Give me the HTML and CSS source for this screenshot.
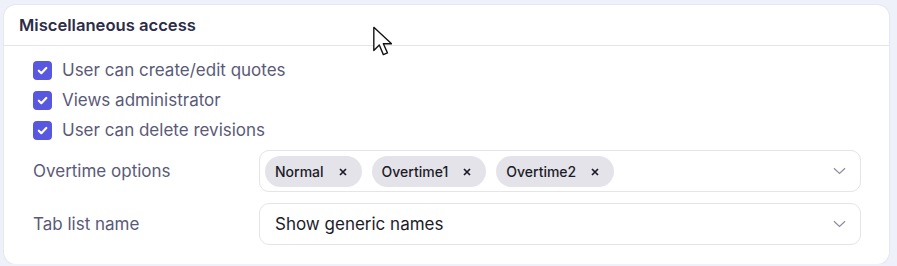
FILE: index.html
```html
<!DOCTYPE html>
<html lang="en">
<head>
  <meta charset="UTF-8" />
  <meta name="viewport" content="width=device-width, initial-scale=1.0"/>
  <title>Miscellaneous access</title>
  <link rel="stylesheet" href="styles.css">
</head>
<body>

  <div class="card">
    <div class="card-head">Miscellaneous access</div>

    <div class="card-body">
      <!-- Checkboxes -->
      <label class="check-row"><span class="box"><svg viewBox="0 0 12 12"><path d="M2.6 6.2l2.3 2.3 4.6-4.8"/></svg></span>User can create/edit quotes</label>
      <label class="check-row"><span class="box"><svg viewBox="0 0 12 12"><path d="M2.6 6.2l2.3 2.3 4.6-4.8"/></svg></span>Views administrator</label>
      <label class="check-row"><span class="box"><svg viewBox="0 0 12 12"><path d="M2.6 6.2l2.3 2.3 4.6-4.8"/></svg></span>User can delete revisions</label>

      <!-- Selects -->
      <div class="field first">
        <div class="field-label">Overtime options</div>
        <div class="select">
          <div class="chips">
            <span class="chip">Normal<svg class="x" viewBox="0 0 8 8"><path d="M1 1l6 6M7 1L1 7"/></svg></span>
            <span class="chip">Overtime1<svg class="x" viewBox="0 0 8 8"><path d="M1 1l6 6M7 1L1 7"/></svg></span>
            <span class="chip">Overtime2<svg class="x" viewBox="0 0 8 8"><path d="M1 1l6 6M7 1L1 7"/></svg></span>
          </div>
          <svg class="chev" viewBox="0 0 14 8"><path d="M1 1l6 5.5L13 1"/></svg>
        </div>
      </div>

      <div class="field">
        <div class="field-label">Tab list name</div>
        <div class="select">
          <div class="value">Show generic names</div>
          <svg class="chev" viewBox="0 0 14 8"><path d="M1 1l6 5.5L13 1"/></svg>
        </div>
      </div>
    </div>

    <svg class="cursor" viewBox="0 0 14 22"><path d="M1 1v17l4-4 3 7 3-1.3-3-6.7h6z"/></svg>
  </div>

</body>
</html>
```

FILE: styles.css
```css
:root {
  --page-bg: #eef0fa;
  --white: #fff;
  --title: #2b2c48;
  --label: #5a5a78;
  --text: #1c1c28;
  --line: #e4e4ea;
  --indigo: #5757e0;
  --chip: #e4e3ea;
  --chev: #8c8c9c;
}

* {
  box-sizing: border-box;
}

body {
  margin: 0;
  font-family: Inter, 'Noto Sans', sans-serif;
  background: var(--page-bg);
  color: var(--text);
  font-size: 17px;
}

.card {
  position: relative;
  width: 885px;
  margin: 5px 0 0 4px;
  height: 259px;
  background: var(--white);
  border-radius: 12px;
  box-shadow: 0 0 0 1px #e6e7f0;
}

.card-head {
  height: 41px;
  padding: 0 15px;
  display: flex;
  align-items: center;
  font-size: 16.6px;
  font-weight: 600;
  color: var(--title);
  border-bottom: 1px solid var(--line);
}

.card-body {
  padding: 9px 28px 0 29px;
}

.check-row {
  display: flex;
  align-items: center;
  height: 30px;
  color: var(--label);
}

.box {
  width: 19px;
  height: 19px;
  margin-right: 10px;
  border-radius: 4px;
  background: var(--indigo);
  display: flex;
  align-items: center;
  justify-content: center;
}

.box svg {
  width: 13px;
  height: 13px;
  fill: none;
  stroke: var(--white);
  stroke-width: 2;
  stroke-linecap: round;
  stroke-linejoin: round;
}

.field {
  display: flex;
  align-items: center;
  margin-top: 11px;
}

.field.first {
  margin-top: 5px;
}

.field-label {
  width: 226px;
  color: var(--label);
}

.select {
  flex: 1;
  height: 42px;
  display: flex;
  align-items: center;
  justify-content: space-between;
  padding: 0 14px 0 5px;
  border: 1px solid var(--line);
  border-radius: 10px;
}

.chips {
  display: flex;
  gap: 10px;
  padding-top: 1px;
}

.chip {
  height: 31px;
  display: flex;
  align-items: center;
  padding: 0 15px 0 10px;
  border-radius: 16px;
  background: var(--chip);
  font-size: 14px;
  font-weight: 500;
}

.chip .x {
  width: 8px;
  height: 8px;
  margin-left: 15px;
  fill: none;
  stroke: var(--text);
  stroke-width: 1.7;
}

.value {
  padding-left: 10px;
}

.chev {
  width: 13px;
  height: 8px;
  fill: none;
  stroke: var(--chev);
  stroke-width: 1.3;
}

.cursor {
  position: absolute;
  left: 368px;
  top: 21px;
  width: 20px;
  height: 30px;
  fill: var(--white);
  stroke: #111;
  stroke-width: 1;
  stroke-linejoin: round;
}
```
